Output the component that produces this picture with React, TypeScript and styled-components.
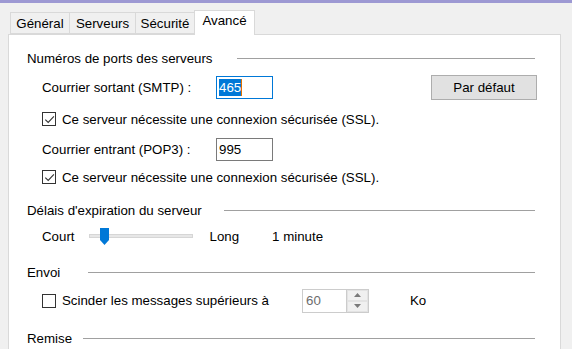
import * as React from 'react';
import styled, { createGlobalStyle } from 'styled-components';

const GlobalStyle = createGlobalStyle`
    html, body {
        margin: 0;
        padding: 0;
        background: #f0f0f0;
        font-family: "Liberation Sans", Arial, sans-serif;
        font-size: 13.3px;
        color: #000;
        overflow: hidden;
    }
`;

const tabs = [
    { label: 'Général', width: 60 },
    { label: 'Serveurs', width: 67 },
    { label: 'Sécurité', width: 60 },
    { label: 'Avancé', width: 61 },
];

const CheckMark = () => (
    <svg width="11" height="11" viewBox="0 0 11 11">
        <polyline points="1.3,5.6 4.2,8.5 9.9,2.4" fill="none" stroke="#333" strokeWidth="1.1" />
    </svg>
);

const Thumb = () => (
    <svg width="9" height="17" viewBox="0 0 9 17">
        <polygon points="0,0 9,0 9,12 4.5,17 0,12" fill="#0078d7" />
    </svg>
);

const Arrow = ({ up }: { up: boolean }) => (
    <svg width="7" height="4" viewBox="0 0 7 4">
        <polygon points={up ? '0,4 7,4 3.5,0' : '0,0 7,0 3.5,4'} fill="#7a7a7a" />
    </svg>
);

const App = () => (
    <>
        <GlobalStyle />
        <Window>
            <TopStrip />
            <TabBar>
                {tabs.map(t => (
                    <Tab key={t.label} w={t.width} active={t.label === 'Avancé'}>{t.label}</Tab>
                ))}
            </TabBar>
            <Panel>
                <SectionHead mt={15} lineFrom={210}>
                    <span>Numéros de ports des serveurs</span>
                    <Rule />
                </SectionHead>
                <FieldRow mt={9}>
                    <Label>Courrier sortant (SMTP) :</Label>
                    <TextBox focused>
                        <Selected>465</Selected>
                        <Caret />
                    </TextBox>
                    <Spacer />
                    <Button>Par défaut</Button>
                </FieldRow>
                <CheckRow mt={11}>
                    <Box><CheckMark /></Box>
                    <span>Ce serveur nécessite une connexion sécurisée (SSL).</span>
                </CheckRow>
                <FieldRow mt={10}>
                    <Label>Courrier entrant (POP3) :</Label>
                    <TextBox>995</TextBox>
                </FieldRow>
                <CheckRow mt={7}>
                    <Box><CheckMark /></Box>
                    <span>Ce serveur nécessite une connexion sécurisée (SSL).</span>
                </CheckRow>

                <SectionHead mt={17} lineFrom={197}>
                    <span>Délais d'expiration du serveur</span>
                    <Rule />
                </SectionHead>
                <SliderRow mt={9}>
                    <span>Court</span>
                    <Track>
                        <ThumbWrap><Thumb /></ThumbWrap>
                    </Track>
                    <span>Long</span>
                    <Duration>1 minute</Duration>
                </SliderRow>

                <SectionHead mt={19} lineFrom={61}>
                    <span>Envoi</span>
                    <Rule />
                </SectionHead>
                <FieldRow mt={8}>
                    <CheckLabel>
                        <Box />
                        <span>Scinder les messages supérieurs à</span>
                    </CheckLabel>
                    <Spin>
                        <SpinValue>60</SpinValue>
                        <SpinButtons>
                            <SpinButton><Arrow up /></SpinButton>
                            <SpinButton><Arrow up={false} /></SpinButton>
                        </SpinButtons>
                    </Spin>
                    <Unit>Ko</Unit>
                </FieldRow>

                <SectionHead mt={17} lineFrom={56}>
                    <span>Remise</span>
                    <Rule />
                </SectionHead>
            </Panel>
        </Window>
    </>
);

export default App;


/** styles below */

const Window = styled.div`
    display: flex;
    flex-direction: column;
    width: 572px;
    height: 349px;
    overflow: hidden;
`;

const TopStrip = styled.div`
    height: 3px;
    background: #9d99d3;
    flex-shrink: 0;
`;

const TabBar = styled.div`
    display: flex;
    align-items: flex-end;
    padding-left: 11px;
    margin-top: 7px;
    height: 24px;
    flex-shrink: 0;
    position: relative;
    z-index: 1;
`;

const Tab = styled.div<{ active?: boolean; w: number }>`
    box-sizing: border-box;
    width: ${p => p.w}px;
    height: ${p => p.active ? 25 : 22}px;
    padding-top: ${p => p.active ? 2 : 3}px;
    text-align: center;
    margin-bottom: ${p => p.active ? -1 : 0}px;
    background: ${p => p.active ? '#fff' : '#f0f0f0'};
    border: 1px solid #d9d9d9;
    border-bottom: ${p => p.active ? 'none' : '1px solid #d9d9d9'};
    margin-left: -1px;
    white-space: nowrap;
    line-height: 16px;
`;

const Panel = styled.div`
    display: flex;
    flex-direction: column;
    margin-left: 8px;
    width: 553px;
    flex: 1;
    box-sizing: border-box;
    background: #fff;
    border: 1px solid #d9d9d9;
    border-bottom: none;
    padding: 0 25px 0 18px;
`;

const SectionHead = styled.div<{ mt: number; lineFrom: number }>`
    display: flex;
    align-items: center;
    height: 16px;
    margin-top: ${p => p.mt}px;
    flex-shrink: 0;
    white-space: nowrap;

    span {
        width: ${p => p.lineFrom}px;
    }
`;

const Rule = styled.div`
    flex: 1;
    height: 1px;
    background: #a0a0a0;
`;

const FieldRow = styled.div<{ mt: number }>`
    display: flex;
    align-items: center;
    height: 25px;
    margin-top: ${p => p.mt}px;
    padding-left: 15px;
    flex-shrink: 0;
`;

const Label = styled.div`
    width: 174px;
    white-space: nowrap;
`;

const TextBox = styled.div<{ focused?: boolean }>`
    box-sizing: border-box;
    width: 57px;
    height: 23px;
    border: 1px solid ${p => p.focused ? '#0078d7' : '#7a7a7a'};
    display: flex;
    align-items: center;
    padding-left: 2px;
    background: #fff;
`;

const Selected = styled.span`
    background: #0078d7;
    color: #fff;
    line-height: 17px;
`;

const Caret = styled.span`
    width: 1px;
    height: 17px;
    background: #e07000;
`;

const Spacer = styled.div`
    flex: 1;
`;

const Button = styled.div`
    box-sizing: border-box;
    width: 106px;
    height: 25px;
    background: #e1e1e1;
    border: 1px solid #adadad;
    display: flex;
    align-items: center;
    justify-content: center;
    margin-right: -2px;
`;

const CheckRow = styled.div<{ mt: number }>`
    display: flex;
    align-items: center;
    gap: 6px;
    height: 16px;
    margin-top: ${p => p.mt}px;
    padding-left: 15px;
    flex-shrink: 0;
    white-space: nowrap;
`;

const CheckLabel = styled.div`
    display: flex;
    align-items: center;
    gap: 6px;
    width: 260px;
    white-space: nowrap;
`;

const Box = styled.div`
    box-sizing: border-box;
    width: 14px;
    height: 14px;
    border: 1px solid #333;
    background: #fff;
    display: flex;
    align-items: center;
    justify-content: center;
    flex-shrink: 0;
`;

const SliderRow = styled.div<{ mt: number }>`
    display: flex;
    align-items: center;
    height: 18px;
    margin-top: ${p => p.mt}px;
    padding-left: 15px;
    flex-shrink: 0;
`;

const Track = styled.div`
    position: relative;
    box-sizing: border-box;
    width: 104px;
    height: 4px;
    margin: 0 17px 0 14px;
    background: #e7e7e7;
    border: 1px solid #d6d6d6;
`;

const ThumbWrap = styled.div`
    position: absolute;
    left: 10px;
    top: -7px;
    display: flex;
`;

const Duration = styled.span`
    margin-left: 33px;
`;

const Spin = styled.div`
    box-sizing: border-box;
    display: flex;
    width: 67px;
    height: 24px;
    border: 1px solid #cccccc;
    background: #fff;
`;

const SpinValue = styled.div`
    flex: 1;
    display: flex;
    align-items: center;
    padding-left: 3px;
    color: #6d6d6d;
`;

const SpinButtons = styled.div`
    display: flex;
    flex-direction: column;
    width: 21px;
    border-left: 1px solid #cccccc;
`;

const SpinButton = styled.div`
    flex: 1;
    display: flex;
    align-items: center;
    justify-content: center;
    background: #f0f0f0;
    border: 1px solid #e3e3e3;
`;

const Unit = styled.span`
    margin-left: 41px;
`;
